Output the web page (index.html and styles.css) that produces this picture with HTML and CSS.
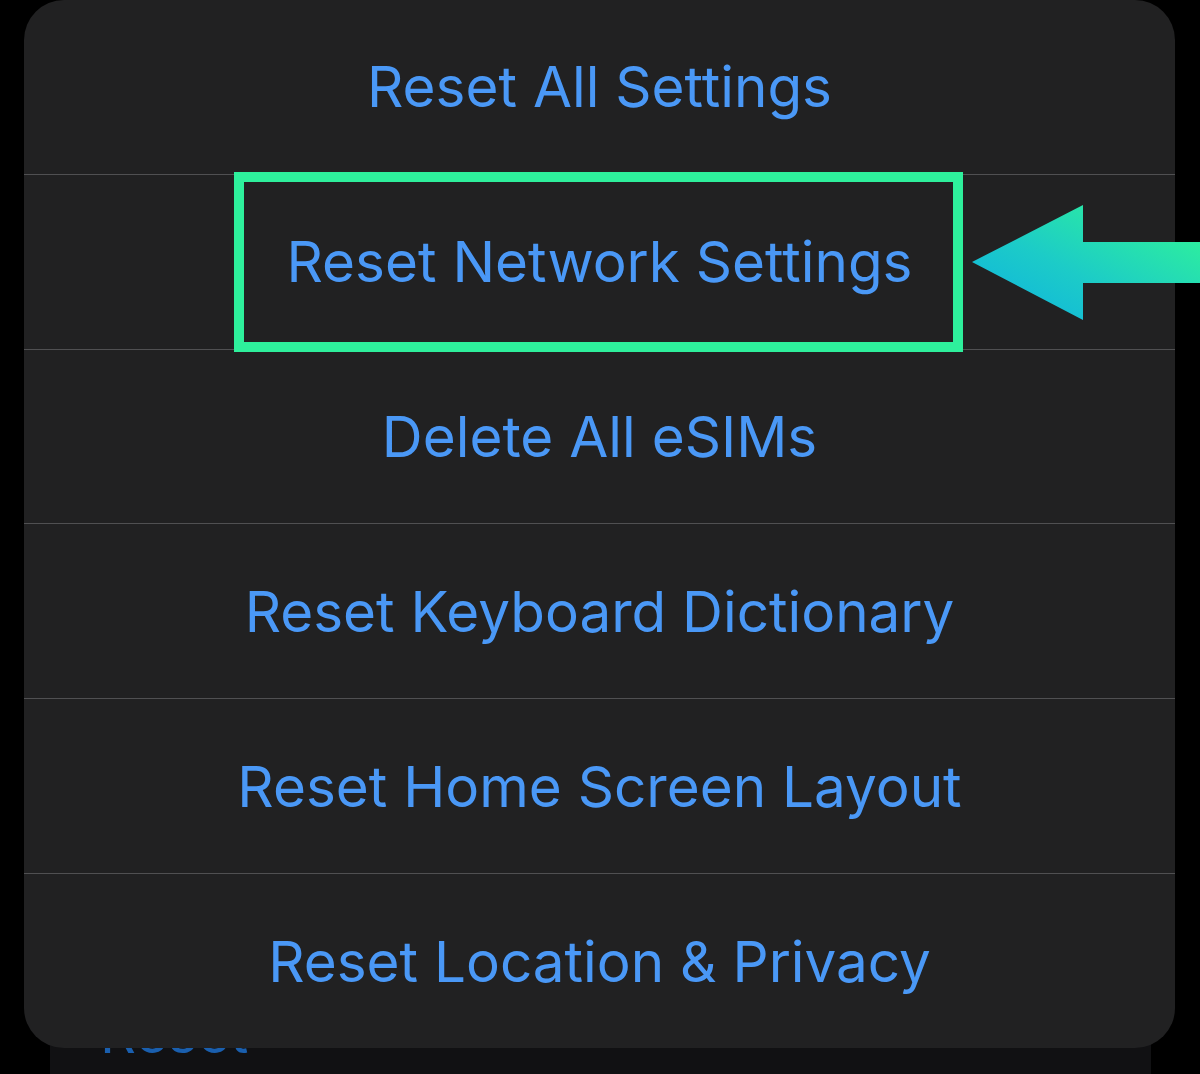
FILE: index.html
```
<!DOCTYPE html>
<html>
<head>
<meta charset="utf-8">
<link rel="stylesheet" href="styles.css">
</head>
<body>
<div class="stage">
  <div class="back-sheet"><span class="back-label">Reset</span></div>
  <div class="menu">
    <div class="row">Reset All Settings</div>
    <div class="row">Reset Network Settings</div>
    <div class="row">Delete All eSIMs</div>
    <div class="row">Reset Keyboard Dictionary</div>
    <div class="row">Reset Home Screen Layout</div>
    <div class="row">Reset Location &amp; Privacy</div>
  </div>
  <div class="highlight"></div>
  <svg class="arrow" width="230" height="118" viewBox="0 0 230 118">
    <defs>
      <linearGradient id="ag" x1="0.1" y1="1" x2="0.95" y2="0.2">
        <stop offset="0" stop-color="#0fb4de"/>
        <stop offset="0.45" stop-color="#1ccbc8"/>
        <stop offset="1" stop-color="#2ef09c"/>
      </linearGradient>
    </defs>
    <polygon points="0,57 111,0 111,37 230,37 230,78 111,78 111,115" fill="url(#ag)"/>
  </svg>
</div>
</body>
</html>
```
FILE: styles.css
```
html, body {
  margin: 0;
  padding: 0;
  background: #000;
}
.stage {
  position: relative;
  width: 1200px;
  height: 1074px;
  overflow: hidden;
  background: #000;
  font-family: Inter, "Liberation Sans", sans-serif;
}
.back-sheet {
  position: absolute;
  left: 50px;
  width: 1101px;
  top: 990px;
  height: 120px;
  background: #111113;
}
.back-label {
  position: absolute;
  left: 50px;
  top: 8px;
  font-size: 56px;
  color: #1a5fae;
  line-height: 70px;
}
.menu {
  position: relative;
  margin-left: 24px;
  width: 1151px;
  height: 1048px;
  background: #212122;
  border-radius: 40px;
  display: flex;
  flex-direction: column;
  overflow: hidden;
}
.row {
  height: 174px;
  display: flex;
  align-items: center;
  justify-content: center;
  color: #4a98f6;
  font-size: 56.6px;
  border-bottom: 1px solid #505052;
}
.row:last-child {
  border-bottom: none;
}
.highlight {
  position: absolute;
  left: 234px;
  top: 172px;
  width: 709px;
  height: 160px;
  border: 10.5px solid #2ef09c;
}
.arrow {
  position: absolute;
  left: 972px;
  top: 205px;
}
```
